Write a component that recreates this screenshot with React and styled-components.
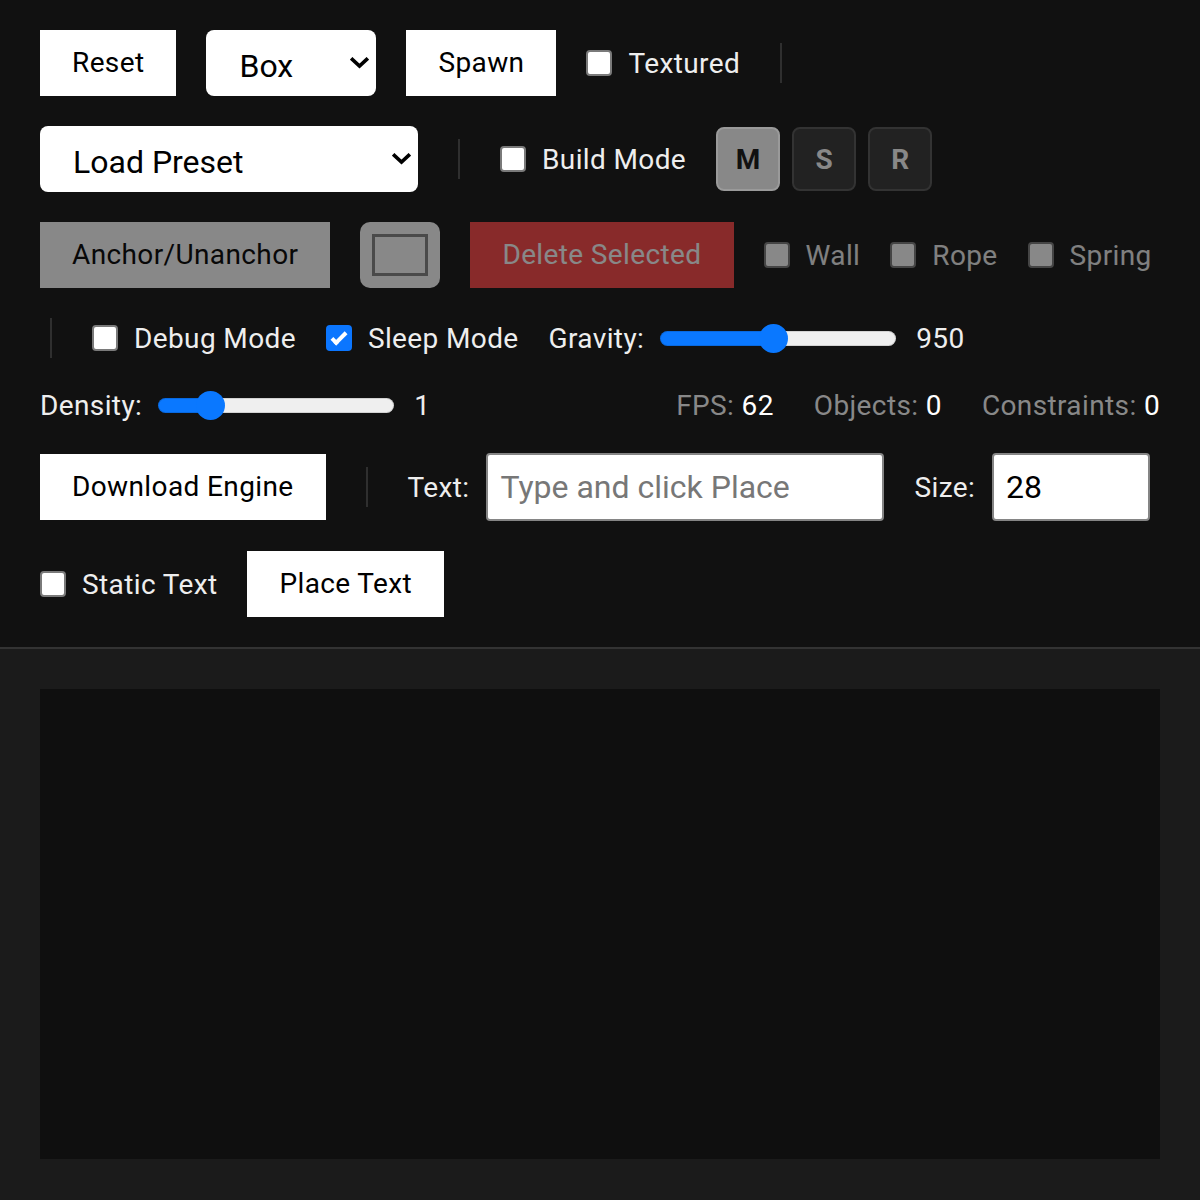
import React, { useState } from "react";
import styled, { createGlobalStyle, css } from "styled-components";

const GlobalStyle = createGlobalStyle`
  * { box-sizing: border-box; }
  html, body { margin: 0; padding: 0; background: #111111; }
  body { font-family: Roboto, "Noto Sans", "Liberation Sans", sans-serif; color: #eeeeee; }
`;

const Page = styled.div`
  display: flex;
  flex-direction: column;
  min-height: 1200px;
`;

const Toolbar = styled.header`
  display: flex;
  flex-wrap: wrap;
  align-items: center;
  gap: 30px;
  padding: 30px 40px;
  background: #111111;
  border-bottom: 2px solid #333333;
`;

const Button = styled.button`
  height: 66px;
  padding: 0 32px;
  border: none;
  border-radius: 0;
  background: ${(p) => (p.$variant === "danger" ? "#ff4444" : "#ffffff")};
  color: ${(p) => (p.$variant === "danger" ? "#ffffff" : "#000000")};
  font-family: inherit;
  font-size: 28px;
  letter-spacing: 0.38px;
  line-height: 1;
  white-space: nowrap;
  cursor: pointer;
  ${(p) =>
    p.$disabled &&
    css`
      opacity: 0.5;
      cursor: default;
    `}
`;

const SelectWrap = styled.div`
  position: relative;
  width: ${(p) => p.$width}px;
  height: 66px;
`;

const Select = styled.select`
  appearance: none;
  -webkit-appearance: none;
  width: 100%;
  height: 100%;
  padding: 6px 40px 0 33px;
  border: none;
  border-radius: 8px;
  background: #ffffff;
  color: #000000;
  font-family: inherit;
  font-size: 32px;
  outline: none;
`;

const Chevron = styled.svg`
  position: absolute;
  right: 7px;
  top: 50%;
  width: 19px;
  height: 12px;
  margin-top: -6px;
  pointer-events: none;
`;

const Divider = styled.span`
  width: 2px;
  height: 40px;
  margin: 0 10px;
  background: #2f2f2f;
`;

const CheckLabel = styled.label`
  display: inline-flex;
  align-items: center;
  gap: 14px;
  font-size: 28px;
  letter-spacing: 0.38px;
  color: #eeeeee;
  white-space: nowrap;
  ${(p) =>
    p.$disabled &&
    css`
      opacity: 0.5;
    `}
`;

const Check = styled.input.attrs({ type: "checkbox" })`
  appearance: none;
  -webkit-appearance: none;
  position: relative;
  flex: none;
  width: 26px;
  height: 26px;
  margin: 0 2px 0 0;
  border: 2px solid #7a7a7a;
  border-radius: 4px;
  background: #ffffff;
  &:checked {
    background: #0b76ff;
    border-color: #0b76ff;
  }
  &:checked::after {
    content: "";
    position: absolute;
    left: 7px;
    top: 2px;
    width: 8px;
    height: 16px;
    box-sizing: border-box;
    border: solid #ffffff;
    border-width: 0 4px 4px 0;
    transform: rotate(45deg);
  }
`;

const ModeGroup = styled.div`
  display: flex;
  gap: 12px;
`;

const ModeButton = styled.button`
  width: 64px;
  height: 64px;
  border-radius: 8px;
  border: 2px solid ${(p) => (p.$active ? "#9a9a9a" : "#333333")};
  background: ${(p) => (p.$active ? "#888888" : "#222222")};
  color: ${(p) => (p.$active ? "#111111" : "#888888")};
  font-family: inherit;
  font-size: 28px;
  font-weight: 700;
  padding: 0;
  cursor: pointer;
`;

const ColorButton = styled.button`
  display: flex;
  align-items: center;
  justify-content: center;
  width: 80px;
  height: 66px;
  padding: 0;
  border: none;
  border-radius: 10px;
  background: #888888;
`;

const Swatch = styled.span`
  width: 56px;
  height: 42px;
  border: 3px solid #4a4a4a;
  background: #888888;
`;

const SliderGroup = styled.div`
  display: flex;
  align-items: center;
  gap: 16px;
  font-size: 28px;
  letter-spacing: 0.38px;
  color: #eeeeee;
`;

const Range = styled.input.attrs({ type: "range" })`
  -webkit-appearance: none;
  appearance: none;
  width: 236px;
  height: 35px;
  margin: 0 4px 0 0;
  background: transparent;
  &::-webkit-slider-runnable-track {
    height: 15px;
    border-radius: 8px;
    background: linear-gradient(
      to right,
      #0a78ff 0,
      #0a78ff var(--fill),
      #efefef var(--fill),
      #efefef 100%
    );
    box-shadow: inset 0 0 0 1px rgba(0, 0, 0, 0.12);
  }
  &::-webkit-slider-thumb {
    -webkit-appearance: none;
    width: 29px;
    height: 29px;
    margin-top: -7px;
    border: none;
    border-radius: 50%;
    background: #0a78ff;
  }
`;

const Stats = styled.div`
  display: flex;
  gap: 40px;
  margin-left: auto;
  font-size: 28px;
  letter-spacing: 0.38px;
`;

const Stat = styled.span`
  color: #888888;
  white-space: nowrap;
  & b {
    font-weight: 400;
    color: #ffffff;
  }
`;

const Field = styled.label`
  display: flex;
  align-items: center;
  gap: 17px;
  font-size: 28px;
  letter-spacing: 0.38px;
  color: #eeeeee;
`;

const TextInput = styled.input`
  width: ${(p) => p.$width}px;
  height: 68px;
  padding: 0 12px;
  border: 2px solid #858585;
  border-radius: 4px;
  background: #ffffff;
  color: #000000;
  font-family: inherit;
  font-size: 32px;
  letter-spacing: 0;
  outline: none;
  &::placeholder {
    color: #777777;
  }
  &::-webkit-inner-spin-button,
  &::-webkit-outer-spin-button {
    -webkit-appearance: none;
    margin: 0;
  }
`;

const Main = styled.main`
  flex: 1;
  padding: 40px;
  background: #1b1b1b;
`;

const Stage = styled.div`
  height: 470px;
  background: #0f0f0f;
`;

function Dropdown({ width, options }) {
  return (
    <SelectWrap $width={width}>
      <Select defaultValue={options[0]}>
        {options.map((o) => (
          <option key={o}>{o}</option>
        ))}
      </Select>
      <Chevron viewBox="0 0 19 12">
        <path d="M2.5 2.5 L9.5 9 L16.5 2.5" fill="none" stroke="#000" strokeWidth="3.6" strokeLinecap="square" />
      </Chevron>
    </SelectWrap>
  );
}

function Slider({ label, min, max, step, initial }) {
  const [value, setValue] = useState(initial);
  const f = (value - min) / (max - min);
  const fill = `${14.5 + f * (236 - 29)}px`;
  return (
    <SliderGroup>
      <span>{label}</span>
      <Range
        min={min}
        max={max}
        step={step}
        value={value}
        onChange={(e) => setValue(Number(e.target.value))}
        style={{ "--fill": fill }}
      />
      <span>{value}</span>
    </SliderGroup>
  );
}

export default function App() {
  return (
    <>
      <GlobalStyle />
      <Page>
        <Toolbar>
          <Button>Reset</Button>
          <Dropdown width={170} options={["Box", "Circle", "Triangle"]} />
          <Button>Spawn</Button>
          <CheckLabel>
            <Check />
            Textured
          </CheckLabel>
          <Divider />
          <Dropdown width={378} options={["Load Preset", "Pyramid", "Bridge", "Newton's Cradle"]} />
          <Divider />
          <CheckLabel>
            <Check />
            Build Mode
          </CheckLabel>
          <ModeGroup>
            <ModeButton $active>M</ModeButton>
            <ModeButton>S</ModeButton>
            <ModeButton>R</ModeButton>
          </ModeGroup>
          <Button $disabled>Anchor/Unanchor</Button>
          <ColorButton aria-label="Colour">
            <Swatch />
          </ColorButton>
          <Button $variant="danger" $disabled>
            Delete Selected
          </Button>
          <CheckLabel $disabled>
            <Check />
            Wall
          </CheckLabel>
          <CheckLabel $disabled>
            <Check />
            Rope
          </CheckLabel>
          <CheckLabel $disabled>
            <Check />
            Spring
          </CheckLabel>
          <Divider />
          <CheckLabel>
            <Check />
            Debug Mode
          </CheckLabel>
          <CheckLabel>
            <Check defaultChecked />
            Sleep Mode
          </CheckLabel>
          <Slider label="Gravity:" min={0} max={2000} step={50} initial={950} />
          <Slider label="Density:" min={0.1} max={5} step={0.1} initial={1} />
          <Stats>
            <Stat>
              FPS: <b>62</b>
            </Stat>
            <Stat>
              Objects: <b>0</b>
            </Stat>
            <Stat>
              Constraints: <b>0</b>
            </Stat>
          </Stats>
          <Button>Download Engine</Button>
          <Divider />
          <Field>
            Text:
            <TextInput $width={398} type="text" placeholder="Type and click Place" />
          </Field>
          <Field>
            Size:
            <TextInput $width={158} type="number" defaultValue={28} />
          </Field>
          <CheckLabel>
            <Check />
            Static Text
          </CheckLabel>
          <Button>Place Text</Button>
        </Toolbar>
        <Main>
          <Stage />
        </Main>
      </Page>
    </>
  );
}
